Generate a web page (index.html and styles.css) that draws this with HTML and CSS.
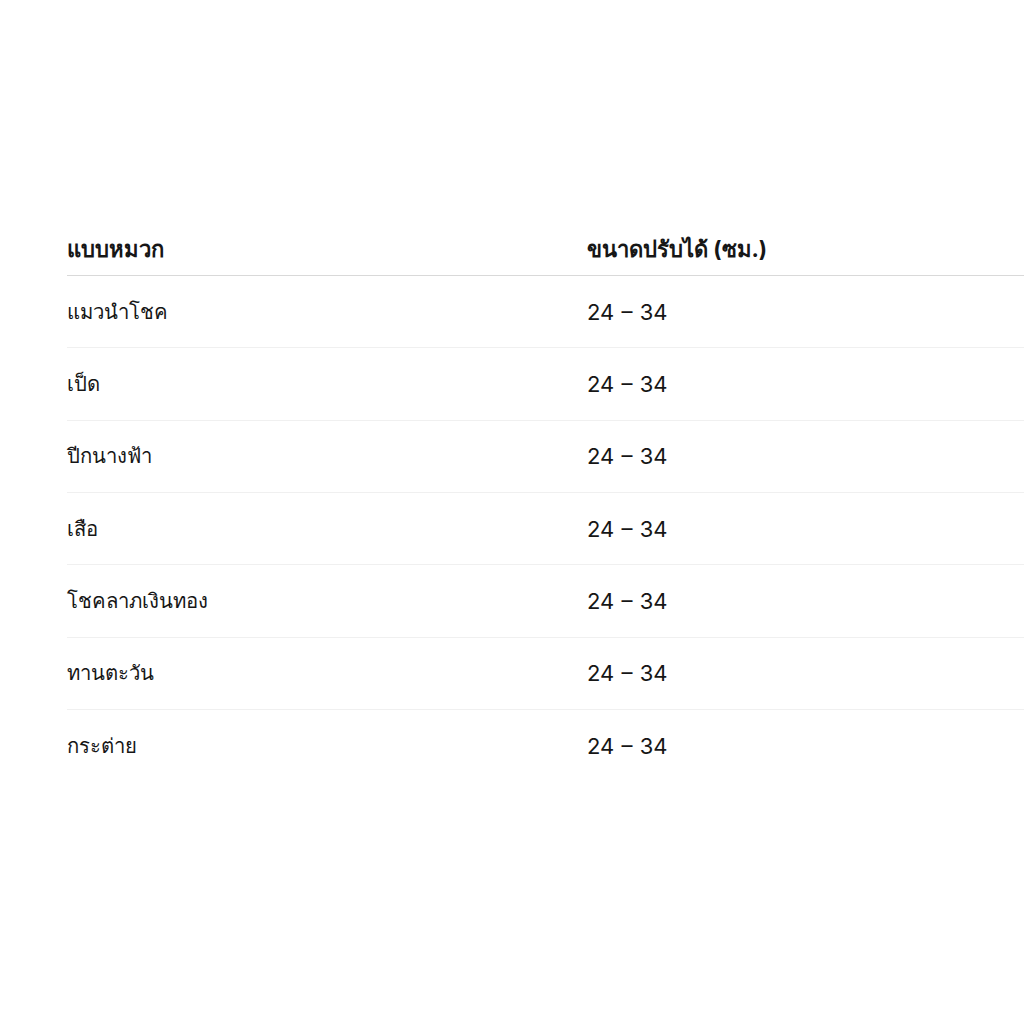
FILE: index.html
```html
<!DOCTYPE html>
<html lang="th">
<head>
<meta charset="utf-8">
<link rel="stylesheet" href="styles.css">
</head>
<body>
<div class="page">
  <table class="sizes">
    <thead>
      <tr><th>แบบหมวก</th><th>ขนาดปรับได้ (ซม.)</th></tr>
    </thead>
    <tbody>
      <tr><td>แมวนำโชค</td><td>24 – 34</td></tr>
      <tr><td>เป็ด</td><td>24 – 34</td></tr>
      <tr><td>ปีกนางฟ้า</td><td>24 – 34</td></tr>
      <tr><td>เสือ</td><td>24 – 34</td></tr>
      <tr><td>โชคลาภเงินทอง</td><td>24 – 34</td></tr>
      <tr><td>ทานตะวัน</td><td>24 – 34</td></tr>
      <tr><td>กระต่าย</td><td>24 – 34</td></tr>
    </tbody>
  </table>
</div>
</body>
</html>
```
FILE: styles.css
```css
html, body {
  margin: 0;
  padding: 0;
  background: #fff;
  overflow: hidden;
}
body {
  font-family: Inter, "Noto Sans", sans-serif;
  color: #161616;
}
.page {
  padding: 224px 0 0 67px;
}
.sizes {
  border-collapse: collapse;
  width: 1100px;
  font-size: 22px;
  line-height: 24px;
}
.sizes th, .sizes td {
  text-align: left;
  padding: 0;
}
.sizes th {
  font-weight: 700;
  padding: 13px 0 14px;
  vertical-align: middle;
  border-bottom: 1px solid #d9d9d9;
}
.sizes th:first-child, .sizes td:first-child {
  width: 520px;
}
.sizes td {
  height: 71.33px;
  vertical-align: middle;
  border-bottom: 1px solid #f0f0f0;
  word-spacing: 1px;
}
.sizes td:first-child {
  font-size: 20.3px;
  word-spacing: 0;
}
.sizes tbody tr:last-child td {
  border-bottom: none;
}
```
